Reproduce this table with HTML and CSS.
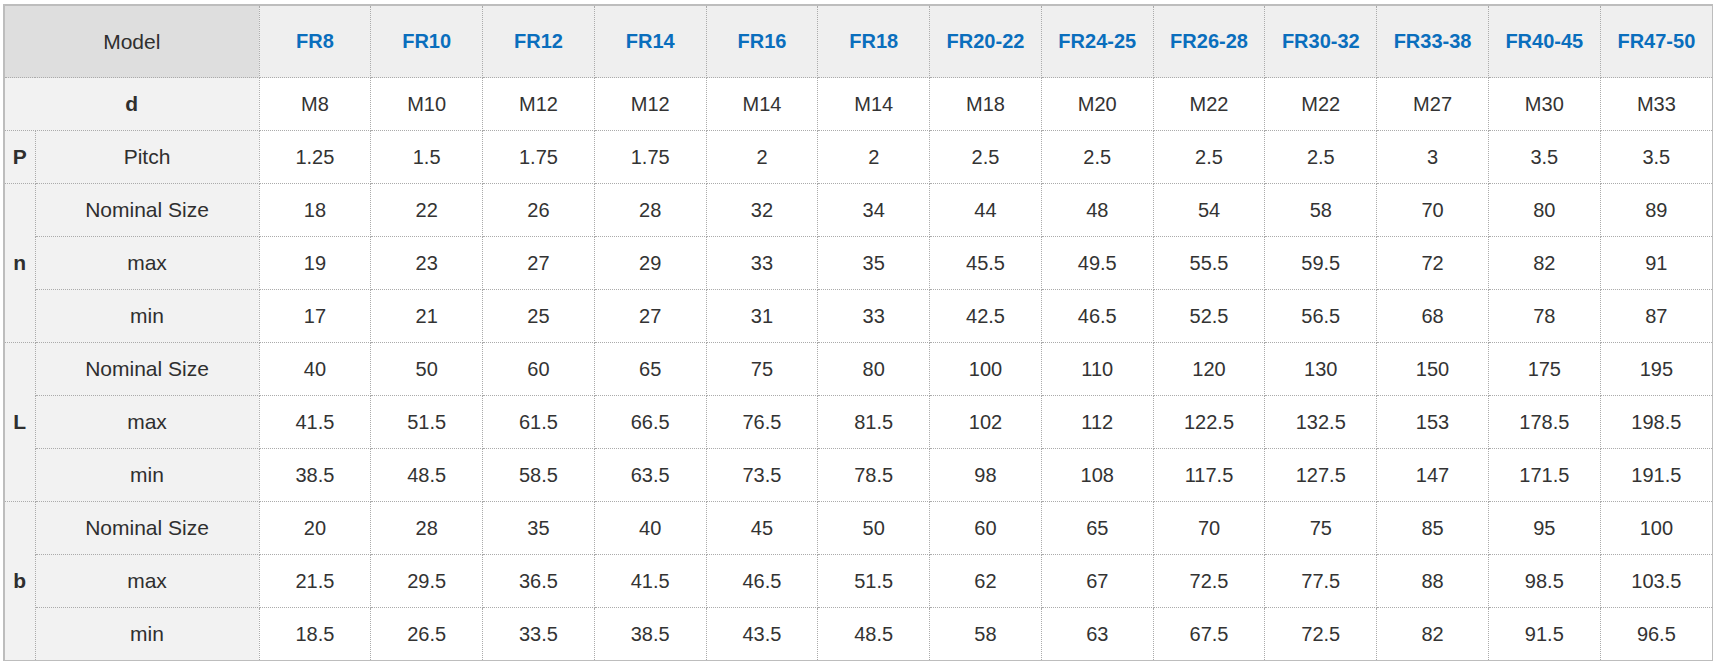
FILE: index.html
```html
<!DOCTYPE html>
<html>
<head>
<meta charset="utf-8">
<link rel="stylesheet" href="styles.css">
</head>
<body>
<div class="wrap">
<table class="spec">
<colgroup><col class="c1"><col class="c2"><col span="13"></colgroup>
<thead>
<tr class="head">
<th colspan="2" class="model">Model</th>
<th>FR8</th><th>FR10</th><th>FR12</th><th>FR14</th><th>FR16</th><th>FR18</th><th>FR20-22</th><th>FR24-25</th><th>FR26-28</th><th>FR30-32</th><th>FR33-38</th><th>FR40-45</th><th>FR47-50</th>
</tr>
</thead>
<tbody>
<tr><td colspan="2" class="lbl sym">d</td><td>M8</td><td>M10</td><td>M12</td><td>M12</td><td>M14</td><td>M14</td><td>M18</td><td>M20</td><td>M22</td><td>M22</td><td>M27</td><td>M30</td><td>M33</td></tr>
<tr><td class="lbl sym">P</td><td class="lbl">Pitch</td><td>1.25</td><td>1.5</td><td>1.75</td><td>1.75</td><td>2</td><td>2</td><td>2.5</td><td>2.5</td><td>2.5</td><td>2.5</td><td>3</td><td>3.5</td><td>3.5</td></tr>
<tr><td rowspan="3" class="lbl sym">n</td><td class="lbl">Nominal Size</td><td>18</td><td>22</td><td>26</td><td>28</td><td>32</td><td>34</td><td>44</td><td>48</td><td>54</td><td>58</td><td>70</td><td>80</td><td>89</td></tr>
<tr><td class="lbl">max</td><td>19</td><td>23</td><td>27</td><td>29</td><td>33</td><td>35</td><td>45.5</td><td>49.5</td><td>55.5</td><td>59.5</td><td>72</td><td>82</td><td>91</td></tr>
<tr><td class="lbl">min</td><td>17</td><td>21</td><td>25</td><td>27</td><td>31</td><td>33</td><td>42.5</td><td>46.5</td><td>52.5</td><td>56.5</td><td>68</td><td>78</td><td>87</td></tr>
<tr><td rowspan="3" class="lbl sym">L</td><td class="lbl">Nominal Size</td><td>40</td><td>50</td><td>60</td><td>65</td><td>75</td><td>80</td><td>100</td><td>110</td><td>120</td><td>130</td><td>150</td><td>175</td><td>195</td></tr>
<tr><td class="lbl">max</td><td>41.5</td><td>51.5</td><td>61.5</td><td>66.5</td><td>76.5</td><td>81.5</td><td>102</td><td>112</td><td>122.5</td><td>132.5</td><td>153</td><td>178.5</td><td>198.5</td></tr>
<tr><td class="lbl">min</td><td>38.5</td><td>48.5</td><td>58.5</td><td>63.5</td><td>73.5</td><td>78.5</td><td>98</td><td>108</td><td>117.5</td><td>127.5</td><td>147</td><td>171.5</td><td>191.5</td></tr>
<tr><td rowspan="3" class="lbl sym">b</td><td class="lbl">Nominal Size</td><td>20</td><td>28</td><td>35</td><td>40</td><td>45</td><td>50</td><td>60</td><td>65</td><td>70</td><td>75</td><td>85</td><td>95</td><td>100</td></tr>
<tr><td class="lbl">max</td><td>21.5</td><td>29.5</td><td>36.5</td><td>41.5</td><td>46.5</td><td>51.5</td><td>62</td><td>67</td><td>72.5</td><td>77.5</td><td>88</td><td>98.5</td><td>103.5</td></tr>
<tr><td class="lbl">min</td><td>18.5</td><td>26.5</td><td>33.5</td><td>38.5</td><td>43.5</td><td>48.5</td><td>58</td><td>63</td><td>67.5</td><td>72.5</td><td>82</td><td>91.5</td><td>96.5</td></tr>
</tbody>
</table>
</div>
</body>
</html>
```

FILE: styles.css
```css
html, body {
  margin: 0;
  padding: 0;
  background: #ffffff;
}
body {
  padding: 4px 0 0 3px;
  font-family: "Liberation Sans", Arial, sans-serif;
  color: #333333;
}
.wrap {
  width: 1707px;
  border: 2px solid #bdbdbd;
  border-right-width: 1px;
  border-bottom-width: 1px;
}
.spec {
  width: 100%;
  border-collapse: collapse;
  border-style: hidden;
  table-layout: fixed;
  font-size: 20px;
}
.c1 { width: 30px; }
.c2 { width: 224px; }
.spec th, .spec td {
  border: 1px dotted #ababab;
  text-align: center;
  vertical-align: middle;
  padding: 0;
  height: 52px;
}
.head th {
  height: 71px;
  background: #efefef;
  color: #0a6ebd;
  font-weight: bold;
}
.head th.model {
  background: #dedede;
  color: #2f2f2f;
  font-weight: normal;
  font-size: 21px;
}
.lbl {
  background: #f2f2f2;
  font-size: 21px;
  color: #2f2f2f;
}
.sym {
  font-weight: bold;
  font-size: 21px;
}
```
